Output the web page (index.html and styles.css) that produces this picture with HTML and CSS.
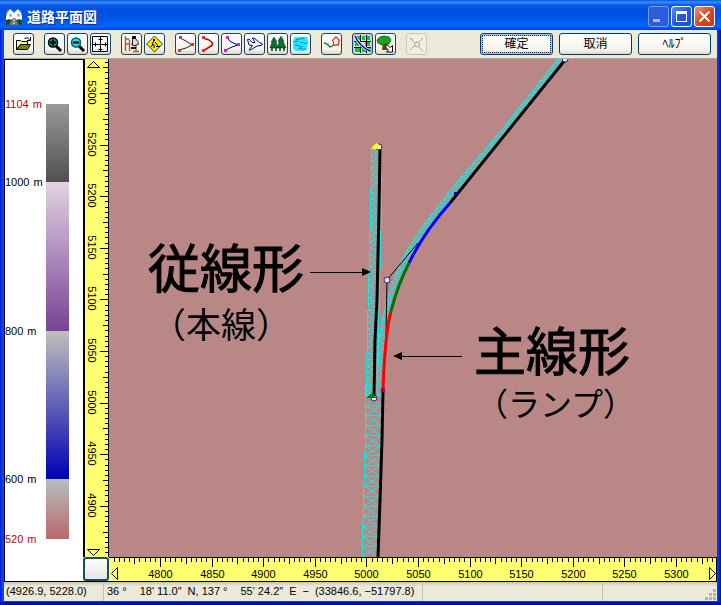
FILE: index.html
```html
<!DOCTYPE html>
<html lang="ja">
<head>
<meta charset="utf-8">
<title>道路平面図</title>
<link rel="stylesheet" href="styles.css">
</head>
<body>
<div class="window">
  <header class="titlebar">
    <svg class="app-icon" viewBox="0 0 16 16" aria-hidden="true">
      <path fill="#2a6fa8" d="M0 1h16v9H0z"/>
      <path fill="#fff" d="M0 8l1-4 3-4 4 4 4-4 3 4 1 4v3H0z"/>
      <path fill="#8fa9bd" d="M4 4l2 2-1 2-2-1zM12 4l2 2-1 2-2-1z"/>
      <path fill="#174d20" d="M0 11l3-1 2 1 3-2 3 2 2-1 3 1v5H0z"/>
      <path fill="#777" d="M7 9h2l4 7H3z"/>
      <path stroke="#fff" stroke-dasharray="2 1" d="M8 10v6"/>
    </svg>
    <h1 class="title">道路平面図</h1>
    <div class="caption-buttons">
      <button class="caption minimize" aria-label="最小化"><svg viewBox="0 0 21 21"><path fill="#a9bdf5" d="M5 13h7v3H5z"/></svg></button>
      <button class="caption" aria-label="最大化"><svg viewBox="0 0 21 21"><path fill="#fff" fill-rule="evenodd" d="M5 5h11v11H5zM6 8v7h9V8z"/></svg></button>
      <button class="caption close" aria-label="閉じる"><svg viewBox="0 0 21 21"><path stroke="#fff" stroke-width="2" d="M5.500 5.500l10 10M15.500 5.500l-10 10"/></svg></button>
    </div>
  </header>

  <div class="toolbar">
    <div class="tools">
      <div class="group">
        <button class="tool" aria-label="開く"><svg viewBox="0 0 19 20"><path fill="#ffff9c" stroke="#000" d="M2.500 15.500v-9h4l1 1h6v3h-7z"/><path fill="#808000" stroke="#000" d="M2.500 15.500l4-5h10l-3 5z"/><path fill="none" stroke="#000" d="M10.500 4.500q3-2 5 1M16.500 3v3.500H13"/></svg></button>
      </div>
      <div class="group">
        <button class="tool" aria-label="拡大"><svg viewBox="0 0 19 20"><path stroke="#000" stroke-width="3" d="M11 12l5 5"/><circle cx="8" cy="8.500" r="4.500" fill="#009c9c" stroke="#000" stroke-width="1.500"/><path stroke="#000" stroke-width="2" d="M5 8.500h6M8 5.500v6"/></svg></button>
        <button class="tool" aria-label="縮小"><svg viewBox="0 0 19 20"><path stroke="#000" stroke-width="3" d="M11 12l5 5"/><circle cx="8" cy="8.500" r="4.500" fill="#20dede" stroke="#006070" stroke-width="1.500"/><path stroke="#000" stroke-width="2" d="M5 8.500h6"/></svg></button>
        <button class="tool" aria-label="全体表示"><svg viewBox="0 0 19 20"><path fill="none" stroke="#000" d="M1.500 2.500h15v15h-15zM9.500 3v14M2 10.500h14M7.500 5.500h4M7.500 15.500h4M4.500 8.500v4M14.500 8.500v4"/></svg></button>
      </div>
      <div class="group">
        <button class="tool" aria-label="測量"><svg viewBox="0 0 19 20"><path fill="none" stroke="#a0643c" stroke-width="1.500" d="M3.500 2v15M7.500 6v11M3.500 5h4M3.500 10h4M9 10h8M14 11v7M11 17.500h6"/><path fill="#ddd" stroke="#222" d="M10.500 4.500h3l3 4-2 3h-4z"/><path fill="#111" d="M10 2h4v3h-4zM9 13h5v2H9z"/></svg></button>
        <button class="tool" aria-label="工事"><svg viewBox="0 0 19 20"><path fill="#ffee00" stroke="#333" d="M9.500 2l8 8-8 8-8-8z"/><path fill="none" stroke="#000" d="M9 7l-2 3 2 1v3M8 10l-2 3M10 8l3 4"/><path d="M8 5h2v2H8zM11 12h4v1h-4z"/></svg></button>
      </div>
      <div class="group">
        <button class="tool" aria-label="折線"><svg viewBox="0 0 19 20"><path fill="none" stroke="#222" d="M4 4l6 3 6 4-6 3-7 2"/><path fill="#e03030" d="M3 2h3v3H3zM15 9h3v3h-3zM2 15h3v3H2z"/></svg></button>
        <button class="tool" aria-label="曲線"><svg viewBox="0 0 19 20"><path fill="none" stroke="#c00000" stroke-width="1.500" d="M4 4l6 2q6 4 2 6l-8 5"/><path fill="#e03030" d="M3 2h3v3H3zM3 15h3v3H3z"/></svg></button>
        <button class="tool" aria-label="道路線形"><svg viewBox="0 0 19 20"><path fill="none" stroke="#000090" d="M5 4l4 4 7 3-6 2-6 3"/><path fill="#d020d0" d="M4 2h3v3H4zM15 9h3v3h-3zM2 15h3v3H2z"/></svg></button>
        <button class="tool" aria-label="飛行ルート"><svg viewBox="0 0 19 20"><path fill="#fff" stroke="#000080" d="M2.500 5.500L4 5l3 3.500h3L7.500 4H9l5.500 4.500 2.500 1q1 1.500-1 2l-4 .5-6.500 4H4l3.500-4.500L4 11z"/></svg></button>
        <button class="tool" aria-label="森"><svg viewBox="0 0 19 20"><path fill="#087030" stroke="#063d18" stroke-width=".5" d="M6 3l3 5-1 0 2 6H2l2-6H3zM13 2l3 5-1 0 3 7h-9l2-6-1-1z"/><path stroke="#063d18" stroke-width="1.500" d="M4 13v4M8 13v4M12 13v4M16 13v4"/></svg></button>
        <button class="tool" aria-label="湖沼"><svg viewBox="0 0 19 20"><path fill="#20ecff" d="M4 3h12l1 3-1 10-4 1H4l-2-3V6z"/><path fill="none" stroke="#1080c8" d="M5 5q2 2 4 0t4 0M3 8q2-2 4 0M9 9q2-2 4 0t4-1M4 12q2-2 4 0t4 0M7 15q2-2 4 0t4-1"/></svg></button>
      </div>
      <div class="group">
        <button class="tool" aria-label="地点"><svg viewBox="0 0 19 20"><path fill="none" stroke="#287838" stroke-width="1.500" d="M2 9q4 1 5 3t5-1 5-1"/><path fill="#fff" stroke="#e04020" stroke-width="1.300" d="M10 7l4-4 4 4M11.500 7v4h5V7"/></svg></button>
      </div>
      <div class="group">
        <button class="tool pressed" aria-label="地図"><svg viewBox="0 0 19 20"><path fill="#d8d8d8" d="M1 1h17v18H1z"/><path fill="#00c838" d="M2 2h5v4H2zM9 2h3v4H9zM14 2h3v4h-3zM2 8h4v4H2zM12 8h5v4h-5zM2 14h5v4H2zM9 14h4v4H9zM15 14h3v4h-3z"/><path stroke="#111" fill="none" d="M7.500 1v18M13.500 1v18M1 7.500h17M1 13.500h17"/><path stroke="#fff" stroke-width="3" fill="none" d="M2 2q4 10 15 15"/><path stroke="#0000d8" stroke-width="1.500" fill="none" d="M2 2q4 10 15 15"/></svg></button>
        <button class="tool" aria-label="樹木"><svg viewBox="0 0 19 20"><path fill="#704010" d="M7 8h3l1 8H6z"/><path fill="#20a020" stroke="#087018" d="M2 9L1 6l3-3 4-1 5 1 2 3-2 4-4 0-3 1z"/><path fill="#fff" stroke="#000" d="M10.500 10.500l4 3 2-2v6.500h-6l2-2-3-3z"/></svg></button>
      </div>
      <div class="group">
        <button class="tool off" aria-label="交差点" disabled><svg viewBox="0 0 19 20"><path fill="none" stroke="#aaa796" d="M3 4l13 13M16 4L3 16M3 4l3 2"/><circle cx="10" cy="10.500" r="2.500" fill="#ece9d8" stroke="#aaa796"/></svg></button>
      </div>
    </div>
    <div class="actions">
      <button class="action default">確定</button>
      <button class="action">取消</button>
      <button class="action">ﾍﾙﾌﾟ</button>
    </div>
  </div>

  <main class="workspace">
    <section class="legend" aria-label="標高">
      <div class="band high"><span class="level limit"><b>1104</b><i>m</i></span><span class="swatch"></span></div>
      <div class="band upper"><span class="level"><b>1000</b><i>m</i></span><span class="swatch"></span></div>
      <div class="band middle"><span class="level"><b>800</b><i>m</i></span><span class="swatch"></span></div>
      <div class="band low"><span class="level"><b>600</b><i>m</i></span><span class="swatch"></span></div>
      <div class="band"><span class="level limit"><b>520</b><i>m</i></span></div>
    </section>

    <div class="ruler vertical"><svg id="ruler-y" viewBox="85 59 23 498" preserveAspectRatio="xMinYMin slice">
      <path class="arrow" d="M87.500 67.500h12l-6-6z"/><path class="arrow" d="M87.500 549.500h12l-6 6z"/>
    </svg></div>

    <svg class="map" viewBox="109 59 608 498" preserveAspectRatio="xMinYMin slice">
      <g class="mesh" id="mesh"></g>
      <path class="guide" d="M418 243L387 280L386 336"/>
      <path class="road" d="M380 149L379 210L377 300L375 340L374 396"/>
      <path class="road" d="M383 391L382 440L380 500L378 557"/>
      <path class="road" d="M565 60L450 203"/>
      <path class="road clothoid" d="M450 203Q424 232 409 263"/>
      <path class="road arc" d="M409 263Q398 284 391 311"/>
      <path class="road transition" d="M391 311Q385 334 383 389"/>
      <path fill="#0000c0" d="M454 192h3v3h-3z"/>
      <path fill="#a00070" d="M381 388h4v4h-4z"/>
      <circle class="node" cx="387" cy="280" r="3"/>
      <circle class="node" cx="379" cy="147" r="3"/>
      <circle class="node" cx="565" cy="59" r="3"/>
      <circle class="node" cx="374" cy="398" r="3"/>
      <path fill="#ffff00" d="M371 149l3-4 3-2 3 3 1 3z"/>
      <path fill="#008000" d="M366 398l6-5 5 5z"/>
      <path class="pointer" d="M310 272H364M400 356H462"/>
      <path d="M371 272l-9-4v8zM393 356l9-4v8z"/>
      <text class="note" x="148" y="288">従線形</text>
      <text class="note sub" x="151" y="338">（本線）</text>
      <text class="note" x="474" y="371">主線形</text>
      <text class="note kana" x="476" y="416">（ランプ）</text>
    </svg>

    <button class="corner" aria-label="表示切替"></button>

    <div class="ruler horizontal"><svg id="ruler-x" viewBox="109 558 607 23" preserveAspectRatio="xMinYMin slice">
      <path class="arrow" d="M117.500 567.500v12l-6-6z"/><path class="arrow" d="M709.500 567.500v12l6-6z"/>
    </svg></div>
  </main>

  <footer class="status">
    <span class="cell position">(4926.9, 5228.0)</span>
    <span class="cell geo"><span>36 °</span><span>18' 11.0″</span><span>N, 137 °</span><span>55' 24.2″</span><span>E</span><span>−</span><span>(33846.6, −51797.8)</span></span>
    <span class="cell spare"></span>
    <span class="cell grip"><svg viewBox="0 0 12 12" aria-hidden="true"><path fill="#b8b4a2" d="M8 0h3v3H8zM4 4h3v3H4zM8 4h3v3H8zM0 8h3v3H0zM4 8h3v3H4zM8 8h3v3H8z"/></svg></span>
  </footer>
</div>
<script src="plan.js"></script>
</body>
</html>
```

FILE: styles.css
```css
* { box-sizing: border-box; }

body {
  margin: 0;
  font-family: "Liberation Sans", "Noto Sans CJK JP", sans-serif;
  font-size: 11px;
  color: #000;
}

button {
  margin: 0;
  padding: 0;
  font: inherit;
  color: inherit;
}

svg { display: block; }

.window {
  display: flex;
  flex-direction: column;
  height: 100vh;
  padding: 0 4px 4px;
  background: linear-gradient(90deg, #0019cf 0, #0a52f0 3px, #0a3be0 4px, #0a3be0 calc(100% - 4px), #0a3be0 calc(100% - 3px), #00138c 100%);
  box-shadow: inset 0 -3px 0 #0012a0;
}

.titlebar {
  display: flex;
  align-items: center;
  flex: none;
  height: 30px;
  margin: 0 -4px;
  padding: 3px 6px 0;
  background: linear-gradient(#0a4fd8 0, #3a8cff 2px, #0a5cea 5px, #0050e0 9px, #0054e6 18px, #0061fc 24px, #0062ff 27px, #0040c8 30px);
}

.app-icon { width: 16px; height: 16px; }

.title {
  flex: 1;
  margin: 0 0 0 5px;
  font-size: 14px;
  line-height: 20px;
  font-weight: bold;
  color: #fff;
  text-shadow: 1px 1px 0 #0a2f90;
}

.caption-buttons { display: flex; gap: 2px; }

.caption {
  width: 21px;
  height: 21px;
  border: 1px solid #fff;
  border-radius: 3px;
  background: linear-gradient(135deg, #5c8cf4, #2358dc 50%, #1c50d8);
}

.caption svg { width: 21px; height: 21px; margin: -1px; }
.minimize { border-color: #7f9df0; background: #2c5be0; }
.close { background: linear-gradient(135deg, #f0906c, #dc4a24 50%, #c83810); }

.toolbar {
  display: flex;
  justify-content: space-between;
  align-items: center;
  flex: none;
  height: 29px;
  padding: 0 6px 0 9px;
  background: #ece9d8;
  border-bottom: 1px solid #aca899;
}

.tools { display: flex; gap: 10px; }
.group { display: flex; gap: 2px; }

.tool {
  width: 21px;
  height: 22px;
  border: 1px solid #1c4468;
  border-radius: 3px;
  background: linear-gradient(#fff, #f2f1ea 80%, #d8d2c4);
}

.tool svg { width: 19px; height: 20px; }
.tool.pressed { background: #c8c8c4; }
.tool.off { border-color: #c9c7ba; background: #f0eee2; }

.actions { display: flex; gap: 6px; }

.action {
  width: 73px;
  height: 22px;
  border: 1px solid #003c74;
  border-radius: 3px;
  background: linear-gradient(#fff, #f4f3ee 80%, #dcd7ca);
  font-size: 12px;
  line-height: 18px;
}

.action.default {
  box-shadow: inset 0 0 0 2px #a8c0f0;
  outline: 1px dotted #333;
  outline-offset: -3px;
}

.workspace {
  display: grid;
  grid-template: minmax(0, 1fr) 24px / 79px 26px minmax(0, 1fr);
  flex: 1;
  min-height: 0;
  background: #fff;
  border-bottom: 1px solid #000;
}

.legend {
  grid-row: 1 / 3;
  padding-top: 44px;
  border-top: 1px solid #000;
  border-left: 1px solid #000;
}

.band { display: flex; }

.level {
  display: flex;
  gap: 4px;
  width: 41px;
  height: 14px;
  margin-top: -7px;
  line-height: 14px;
}

.level b, .level i { font-weight: normal; font-style: normal; }
.limit { color: #c00000; }
.swatch { width: 23px; }
.high { height: 78px; }
.upper { height: 149px; }
.middle { height: 148px; }
.low { height: 60px; }
.high .swatch { background: linear-gradient(#999, #505050); }
.upper .swatch { background: linear-gradient(#e2d2e2, #784296); }
.middle .swatch { background: linear-gradient(#c0c0bc, #0000b4); }
.low .swatch { background: linear-gradient(#b4bec0, #bc6868); }

.ruler { overflow: hidden; background: #ffff70; }
.ruler svg { width: 100%; height: 100%; }
.vertical { border-left: 2px solid #000; border-right: 1px solid #000; }
.horizontal { border-top: 1px solid #000; border-right: 1px solid #000; }
.ruler path { fill: none; stroke: #000; shape-rendering: crispEdges; }
.ruler .arrow { shape-rendering: auto; }
.ruler text { font-size: 11px; text-anchor: middle; }

.map {
  width: 100%;
  height: 100%;
  background: #b98886;
}

.mesh { fill: none; stroke: #20e4e0; stroke-width: 1; shape-rendering: crispEdges; }
.mesh .hatch { stroke-opacity: .8; }
.guide { fill: none; stroke: #000; }
.road { fill: none; stroke: #000; stroke-width: 3; }
.clothoid { stroke: #0000ff; }
.arc { stroke: #007000; }
.transition { stroke: #ff0000; }
.node { fill: #e8e0ff; stroke: #2020a0; }
.pointer { stroke: #000; shape-rendering: crispEdges; }
.note { font-size: 52px; stroke: #000; stroke-width: 1; }
.sub { font-size: 35px; stroke: none; }
.kana { font-size: 32px; stroke: none; }

.corner {
  border: 2px solid #1c5058;
  border-radius: 3px;
  background: linear-gradient(#fff, #e6e6e6);
}

.status {
  display: flex;
  flex: none;
  height: 19px;
  padding-top: 1px;
  background: linear-gradient(#c8c4b4, #ece9d8 4px);
  line-height: 16px;
  white-space: nowrap;
}

.cell { padding-left: 3px; border-right: 1px solid #c4c0ae; }
.position { width: 100px; padding-left: 2px; }
.geo { display: flex; gap: 6px; width: 319px; }
.geo span:first-child { margin-right: 7px; }
.geo span:nth-child(3) { margin-right: 7px; }
.spare { width: 180px; }

.grip {
  display: flex;
  flex: 1;
  justify-content: flex-end;
  align-items: flex-end;
  border-right: 0;
}

.grip svg { width: 12px; height: 12px; }
```

FILE: plan.js
```js
const NS = "http://www.w3.org/2000/svg";

function add(parent, name, attributes, text) {
  const element = document.createElementNS(NS, name);
  for (const key in attributes) element.setAttribute(key, attributes[key]);
  if (text) element.textContent = text;
  parent.appendChild(element);
}

// 50 m spans 51.6 units on both axes; a tick marks every 5 m.
const STEP = 5.16;

function tickLength(metres, lengths) {
  if (metres % 50 === 0) return lengths[2];
  return metres % 25 === 0 ? lengths[1] : lengths[0];
}

function drawHorizontal(svg) {
  let path = "";
  for (let metres = 4755; metres <= 5335; metres += 5) {
    const x = Math.round(160 + (metres - 4800) / 5 * STEP) + 0.5;
    path += `M${x} 558v${tickLength(metres, [4, 6, 9])}`;
    if (metres % 50 === 0) add(svg, "text", { x: x, y: 578 }, String(metres));
  }
  add(svg, "path", { d: path });
}

function drawVertical(svg) {
  let path = "";
  for (let metres = 4855; metres <= 5330; metres += 5) {
    const y = Math.round(93 + (5300 - metres) / 5 * STEP) + 0.5;
    path += `M108 ${y}h${-tickLength(metres, [3, 5, 8])}`;
    if (metres % 50 === 0) {
      add(svg, "text", { transform: `translate(88 ${y - 1}) rotate(90)` }, String(metres));
    }
  }
  add(svg, "path", { d: path });
}

function sample(points, count) {
  const lengths = [0];
  for (let i = 1; i < points.length; i++) {
    lengths.push(lengths[i - 1] + Math.hypot(points[i][0] - points[i - 1][0], points[i][1] - points[i - 1][1]));
  }
  const result = [];
  for (let n = 0, i = 1; n <= count; n++) {
    const at = lengths[lengths.length - 1] * n / count;
    while (i < points.length - 1 && lengths[i] < at) i++;
    const t = (at - lengths[i - 1]) / (lengths[i] - lengths[i - 1]);
    result.push([0, 1].map(k => points[i - 1][k] + (points[i][k] - points[i - 1][k]) * t));
  }
  return result;
}

function drawStrip(group, left, right, count) {
  const a = sample(left, count);
  const b = sample(right, count);
  let hatch = "";
  for (let i = 0; i < count; i++) {
    hatch += `M${a[i]}L${b[i + 1]}M${b[i]}L${a[i + 1]}M${a[i]}L${b[i]}`;
  }
  add(group, "path", { class: "hatch", d: hatch });
  add(group, "path", { d: `M${left.join("L")}M${right.join("L")}` });
}

drawHorizontal(document.getElementById("ruler-x"));
drawVertical(document.getElementById("ruler-y"));

const mesh = document.getElementById("mesh");
drawStrip(mesh, [[372, 149], [370, 230], [368, 310], [366, 397]], [[382, 149], [381, 230], [379, 310], [377, 397]], 40);
drawStrip(mesh, [[366, 385], [365, 450], [362, 557]], [[382, 385], [381, 440], [378, 557]], 17);
drawStrip(mesh,
  [[558, 59], [500, 132], [453, 187], [420, 230], [403, 257], [390, 290], [383, 317], [379, 340], [377, 388]],
  [[564, 59], [508, 130], [450, 202], [424, 235], [409, 262], [396, 292], [390, 311], [386, 340], [383, 388]], 66);
```
